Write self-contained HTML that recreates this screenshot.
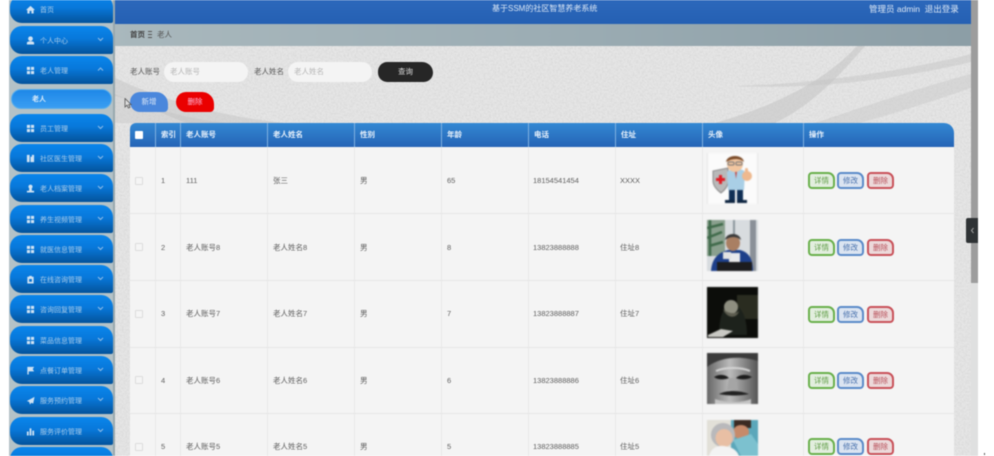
<!DOCTYPE html>
<html lang="zh"><head><meta charset="utf-8"><title>基于SSM的社区智慧养老系统</title>
<style>
*{box-sizing:border-box}
html,body{margin:0;padding:0;width:994px;height:456px;overflow:hidden;background:#fff}
body{font-family:"Liberation Sans","Noto Sans CJK SC",sans-serif;font-size:7.5px;color:#555;position:relative}
.a{position:absolute}
#wrap{position:absolute;left:0;top:0;width:994px;height:456px;overflow:hidden;filter:blur(.45px)}
.m{position:absolute;left:10px;width:103px;height:28px;border-radius:12px 12px 2px 12px;background:linear-gradient(180deg,#0a86ec 0%,#0878da 45%,#04539b 100%);color:#a9cbe8;line-height:31px;font-size:7px}
.m span{position:absolute;left:30px;white-space:nowrap}
.m svg.i{position:absolute;left:16px;top:10px;width:9px;height:9px}
.m svg.c{position:absolute;left:87px;top:10px;width:7px;height:6px}
.th{position:absolute;top:123px;height:24px;line-height:24px;color:#e8f1fb;font-weight:bold;padding-left:5px;border-right:1px solid #7fb0e0}
.v{position:absolute;width:1px;top:147px;height:309px;background:#e8e8e8}
.h{position:absolute;left:130px;width:824px;height:1px;background:#e6e6e6}
.t{position:absolute;white-space:nowrap;height:12px;line-height:12px;color:#5e5e5e}
.cb{position:absolute;left:135px;width:8px;height:8px;border:1px solid #dcdcdc;background:#f5f5f5;border-radius:1px}
.b{position:absolute;width:27px;height:17px;border:2px solid;border-radius:4px 7px 4px 4px;text-align:center;line-height:13px;font-size:7.5px}
.g{left:808px;border-color:#6ab04c;background:#e2eede;color:#5f9d45}
.u{left:837px;border-color:#5b8bc9;background:#dbe4f1;color:#4a72ad}
.r{left:867px;border-color:#c9525a;background:#ecd9da;color:#b8505a}
.pic{position:absolute;left:707px;width:51px;height:51px;overflow:hidden;filter:blur(.5px)}
</style></head><body><div id="wrap">

<!-- sidebar bg -->
<div class="a" style="left:9px;top:0;width:106px;height:456px;background:#b4c2c7"></div>
<div class="a" style="left:113px;top:0;width:2px;height:456px;background:#98a8ae"></div>

<!-- main bg -->
<div class="a" style="left:115px;top:46px;width:856px;height:410px;background:#e6e6e6"></div>
<svg class="a" style="left:115px;top:46px" width="856" height="410" viewBox="0 0 856 410">
<defs><filter id="n" x="0" y="0" width="100%" height="100%"><feTurbulence type="fractalNoise" baseFrequency=".55" numOctaves="2" seed="3"/><feColorMatrix values="0 0 0 0 .55 0 0 0 0 .55 0 0 0 0 .55 0 0 0 .8 -.28"/></filter></defs>
<path d="M0 32C50 55 110 72 180 78L80 80C50 70 25 55 0 50Z" fill="#c6c6c6" opacity=".55"/>
<path d="M0 48C40 65 90 78 150 80L110 77H0Z" fill="#bdbdbd" opacity=".35"/>
<path d="M600 77C660 60 710 35 742 0L750 0C720 35 695 60 660 77Z" fill="#c2c2c2" opacity=".55"/>
<path d="M620 40C700 38 790 25 856 8V16C790 32 700 44 620 40Z" fill="#c6c6c6" opacity=".5"/>
<path d="M700 77C750 60 810 40 856 28V42C810 58 770 70 745 77Z" fill="#c8c8c8" opacity=".45"/>
<rect width="856" height="410" filter="url(#n)"/>
</svg>

<!-- top bar -->
<div class="a" style="left:115px;top:0;width:856px;height:24px;background:linear-gradient(180deg,#2c68bb,#2560b3)"></div>
<div class="a" style="left:492px;top:3px;color:#dbe7f5;font-size:8px;line-height:12px;white-space:nowrap">基于SSM的社区智慧养老系统</div>
<div class="a" style="left:869px;top:3px;color:#dbe7f5;font-size:8.5px;line-height:12px;white-space:nowrap">管理员 admin&nbsp;&nbsp;退出登录</div>

<!-- breadcrumb -->
<div class="a" style="left:115px;top:24px;width:856px;height:22px;background:linear-gradient(90deg,#a9b8bd,#9cadb4 50%,#8c9ea6)"></div>
<div class="a" style="left:130px;top:29px;line-height:12px;font-weight:bold;color:#444">首页</div>
<div class="a" style="left:148px;top:31px;width:4px;height:7px;border-top:1px solid #555;border-bottom:1px solid #555"><div style="margin-top:2px;height:1px;background:#555"></div></div>
<div class="a" style="left:157px;top:29px;line-height:12px;color:#555">老人</div>

<!-- search -->
<div class="a" style="left:130px;top:66px;line-height:12px;color:#555">老人账号</div>
<div class="a" style="left:164px;top:62px;width:84px;height:20px;border-radius:10px;background:#f4f4f4;line-height:20px;padding-left:6px;color:#b5b5b5">老人账号</div>
<div class="a" style="left:254px;top:66px;line-height:12px;color:#555">老人姓名</div>
<div class="a" style="left:288px;top:62px;width:84px;height:20px;border-radius:10px;background:#f4f4f4;line-height:20px;padding-left:6px;color:#b5b5b5">老人姓名</div>
<div class="a" style="left:378px;top:62px;width:55px;height:20px;border-radius:12px 14px 12px 12px;background:#262626;color:#ddd;text-align:center;line-height:20px">查询</div>
<div class="a" style="left:130px;top:92px;width:38px;height:20px;border-radius:10px 12px 4px 10px;background:#4a87dc;color:#dbe7f7;text-align:center;line-height:20px">新增</div>
<div class="a" style="left:176px;top:92px;width:38px;height:20px;border-radius:10px 12px 4px 10px;background:#ea0000;color:#fbd;text-align:center;line-height:20px">删除</div>
<svg class="a" style="left:124px;top:98px" width="8" height="11" viewBox="0 0 8 11"><path d="M1 .5V9L3 7.200 4.400 10 6 9.300 4.700 6.600H7.200Z" fill="#ddd" stroke="#555" stroke-width=".8"/></svg>

<!-- table -->
<div class="a" style="left:130px;top:147px;width:824px;height:309px;background:#f4f4f4"></div>
<div class="a" style="left:130px;top:123px;width:824px;height:24px;border-radius:6px 10px 0 0;background:linear-gradient(180deg,#3388d3,#2564b6)"></div>
<div class="a" style="left:135px;top:131px;width:8px;height:8px;background:#fff;border-radius:1px"></div>
<div class="th" style="left:130px;width:26px;padding:0"></div>
<div class="th" style="left:156px;width:25px">索引</div>
<div class="th" style="left:181px;width:87px">老人账号</div>
<div class="th" style="left:268px;width:87px">老人姓名</div>
<div class="th" style="left:355px;width:87px">性别</div>
<div class="th" style="left:442px;width:87px">年龄</div>
<div class="th" style="left:529px;width:87px">电话</div>
<div class="th" style="left:616px;width:87px">住址</div>
<div class="th" style="left:703px;width:101px">头像</div>
<div class="th" style="left:804px;width:140px;border:0">操作</div>

<div class="v" style="left:155px"></div><div class="v" style="left:180px"></div><div class="v" style="left:267px"></div><div class="v" style="left:354px"></div><div class="v" style="left:441px"></div><div class="v" style="left:528px"></div><div class="v" style="left:615px"></div><div class="v" style="left:702px"></div><div class="v" style="left:803px"></div>
<div class="h" style="top:213px"></div><div class="h" style="top:280px"></div><div class="h" style="top:347px"></div><div class="h" style="top:413px"></div>

<!-- row 1 -->
<div class="cb" style="top:177px"></div><div class="t" style="left:161px;top:175px">1</div><div class="t" style="left:186px;top:175px">111</div><div class="t" style="left:273px;top:175px">张三</div><div class="t" style="left:360px;top:175px">男</div><div class="t" style="left:447px;top:175px">65</div><div class="t" style="left:533px;top:175px">18154541454</div><div class="t" style="left:620px;top:175px">XXXX</div>
<div class="b g" style="top:172px">详情</div><div class="b u" style="top:172px">修改</div><div class="b r" style="top:172px">删除</div>
<!-- row 2 -->
<div class="cb" style="top:243px"></div><div class="t" style="left:161px;top:242px">2</div><div class="t" style="left:186px;top:242px">老人账号8</div><div class="t" style="left:273px;top:242px">老人姓名8</div><div class="t" style="left:360px;top:242px">男</div><div class="t" style="left:447px;top:242px">8</div><div class="t" style="left:533px;top:242px">13823888888</div><div class="t" style="left:620px;top:242px">住址8</div>
<div class="b g" style="top:239px">详情</div><div class="b u" style="top:239px">修改</div><div class="b r" style="top:239px">删除</div>
<!-- row 3 -->
<div class="cb" style="top:310px"></div><div class="t" style="left:161px;top:308px">3</div><div class="t" style="left:186px;top:308px">老人账号7</div><div class="t" style="left:273px;top:308px">老人姓名7</div><div class="t" style="left:360px;top:308px">男</div><div class="t" style="left:447px;top:308px">7</div><div class="t" style="left:533px;top:308px">13823888887</div><div class="t" style="left:620px;top:308px">住址7</div>
<div class="b g" style="top:306px">详情</div><div class="b u" style="top:306px">修改</div><div class="b r" style="top:306px">删除</div>
<!-- row 4 -->
<div class="cb" style="top:376px"></div><div class="t" style="left:161px;top:375px">4</div><div class="t" style="left:186px;top:375px">老人账号6</div><div class="t" style="left:273px;top:375px">老人姓名6</div><div class="t" style="left:360px;top:375px">男</div><div class="t" style="left:447px;top:375px">6</div><div class="t" style="left:533px;top:375px">13823888886</div><div class="t" style="left:620px;top:375px">住址6</div>
<div class="b g" style="top:372px">详情</div><div class="b u" style="top:372px">修改</div><div class="b r" style="top:372px">删除</div>
<!-- row 5 -->
<div class="cb" style="top:443px"></div><div class="t" style="left:161px;top:441px">5</div><div class="t" style="left:186px;top:441px">老人账号5</div><div class="t" style="left:273px;top:441px">老人姓名5</div><div class="t" style="left:360px;top:441px">男</div><div class="t" style="left:447px;top:441px">5</div><div class="t" style="left:533px;top:441px">13823888885</div><div class="t" style="left:620px;top:441px">住址5</div>
<div class="b g" style="top:438px">详情</div><div class="b u" style="top:438px">修改</div><div class="b r" style="top:438px">删除</div>

<!-- avatars -->
<div class="pic" style="top:153px;background:#fbfbfb;border:1px solid #e8e8e8;border-top:0;border-bottom:0">
<svg width="49" height="51" viewBox="0 0 49 51">
<path d="M5 18L20 15 20 30C19 36 14 39 13 40 9 37 5 33 5 28Z" fill="#b9b9b9" stroke="#777" stroke-width=".8"/>
<path d="M8 25h3v-3h3v3h3v3h-3v3h-3v-3H8z" fill="#e01b24"/>
<path d="M19 19C22 15 35 15 37 19L36 37H20Z" fill="#a9cfe6"/>
<path d="M27 18l2 0-1 8z" fill="#c8332c"/>
<ellipse cx="27" cy="11" rx="8" ry="8" fill="#f2c6a0"/>
<path d="M18 9C19 1 35 1 36 9 32 5 24 5 18 9Z" fill="#7a4a28"/>
<rect x="20" y="9" width="6" height="3" rx="1" fill="none" stroke="#456" stroke-width=".7"/><rect x="28" y="9" width="6" height="3" rx="1" fill="none" stroke="#456" stroke-width=".7"/>
<circle cx="39" cy="23" r="5" fill="#eeb98f"/><rect x="37" y="15" width="3" height="6" rx="1.500" fill="#eeb98f"/>
<path d="M21 37h6v10h-6zM29 37h6v10h-6z" fill="#0f2f55"/>
<path d="M17 47h10v3H17zM29 47h10v3H29z" fill="#0d2440"/>
</svg></div>

<div class="pic" style="top:220px;background:#cfd4d8">
<svg width="51" height="51" viewBox="0 0 51 51"><rect width="51" height="51" fill="#d8dcdf"/><rect x="0" y="0" width="18" height="36" fill="#8aa08e"/><path d="M3 0V36M0 8L16 4M0 18L15 12M2 26L16 22" stroke="#3f6a4a" stroke-width="2.500" fill="none"/><rect x="26" y="0" width="2" height="30" fill="#8c969c"/><rect x="43" y="0" width="6" height="51" fill="#8a9098"/>
<path d="M4 51C5 36 14 32 21 30H33C41 32 46 38 46 51Z" fill="#1d3f8a"/><ellipse cx="26" cy="23" rx="7" ry="8" fill="#a97f63"/><path d="M18 20C19 12 33 12 34 20 30 16 23 16 18 20Z" fill="#3a3a3a"/><path d="M22 33H33V44H22Z" fill="#e9e9ec"/><rect x="16" y="32" width="8" height="7" fill="#e2e2e2"/><rect x="10" y="42" width="35" height="9" fill="#1c1c1e"/></svg></div>

<div class="pic" style="top:287px;background:#0c0d0a">
<svg width="51" height="51" viewBox="0 0 51 51"><rect width="51" height="51" fill="#0c0d0a"/><rect x="30" y="8" width="21" height="24" fill="#2a2c20"/><path d="M12 48C12 30 16 20 24 16 32 18 40 26 40 48Z" fill="#1d221c"/><ellipse cx="24" cy="20" rx="7" ry="7" fill="#8e8e80"/><path d="M16 22C20 26 28 28 32 24 30 32 20 32 16 22Z" fill="#5d5d50"/><path d="M1 48L14 42 26 44 16 50H1Z" fill="#c9c9c4"/></svg></div>

<div class="pic" style="top:353px;background:#777">
<svg width="51" height="51" viewBox="0 0 51 51"><defs><linearGradient id="fg" x1="0" x2="1"><stop offset="0" stop-color="#666"/><stop offset=".45" stop-color="#bbb"/><stop offset="1" stop-color="#555"/></linearGradient></defs><rect width="51" height="51" fill="url(#fg)"/><path d="M0 0H51V8C35 3 15 3 0 14Z" fill="#3b3b3b"/><path d="M9 18C18 14 34 14 43 18" stroke="#d5d5d5" stroke-width="2" fill="none"/><path d="M7 24C12 21 18 21 22 25 17 27 11 27 7 24ZM29 25C33 21 40 21 45 24 40 27 33 27 29 25Z" fill="#1c1c1c"/><path d="M22 25L20 37H31L29 25Z" fill="#a5a5a5"/><path d="M12 41C20 37 32 37 42 41 34 43 20 43 12 41Z" fill="#222"/><path d="M8 46C20 50 34 50 44 46V51H8Z" fill="#c4c4c4"/></svg></div>

<div class="pic" style="top:420px;background:#dbe3e6;height:36px">
<svg width="51" height="36" viewBox="0 0 51 36"><rect width="51" height="36" fill="#e2e0d8"/><rect x="24" y="0" width="27" height="36" fill="#5ba7ba"/><rect x="27" y="0" width="17" height="8" fill="#3a2a22"/><ellipse cx="34" cy="12" rx="8" ry="7" fill="#c68a6a"/><path d="M26 20L44 14 51 24V36H34Z" fill="#7cc1cf"/><ellipse cx="16" cy="15" rx="12" ry="12" fill="#b9b9bb"/><ellipse cx="17" cy="18" rx="8.500" ry="9" fill="#e8bfa4"/><path d="M2 36C4 28 10 25 17 26 25 27 30 30 32 36Z" fill="#f3f3f3"/></svg></div>

<!-- sidebar items -->
<div class="m" style="top:-5px"><svg class="i" viewBox="0 0 10 10"><path d="M5 1L0 5.500H1.500V9.500H4V6.500H6V9.500H8.500V5.500H10Z" fill="#cfe2f3"/></svg><span>首页</span></div>
<div class="m" style="top:26px"><svg class="i" viewBox="0 0 10 10"><circle cx="5" cy="3" r="2.600" fill="#cfe2f3"/><path d="M1 9.500V7.500C1 6.300 3 5.800 5 5.800S9 6.300 9 7.500V9.500Z" fill="#cfe2f3"/></svg><span>个人中心</span><svg class="c" viewBox="0 0 7 6"><path d="M1 2L3.500 4.500 6 2" fill="none" stroke="#8fbce6"/></svg></div>
<div class="m" style="top:56px"><svg class="i" viewBox="0 0 10 10"><path d="M1 1h3.500v3.500H1zM5.500 1H9v3.500H5.500zM1 5.500h3.500V9H1zM5.500 5.500H9V9H5.500z" fill="#cfe2f3"/></svg><span>老人管理</span><svg class="c" viewBox="0 0 7 6"><path d="M1 4.500L3.500 2 6 4.500" fill="none" stroke="#8fbce6"/></svg></div>
<div class="a" style="left:11px;top:89px;width:101px;height:20px;border-radius:10px;background:linear-gradient(180deg,#1e88e8,#3a9ef2);border:1px solid #5aaeea;color:#dcecfa;line-height:20px;padding-left:20px;font-weight:bold;font-size:7px">老人</div>
<div class="m" style="top:114px"><svg class="i" viewBox="0 0 10 10"><path d="M1 1h3.500v3.500H1zM5.500 1H9v3.500H5.500zM1 5.500h3.500V9H1zM5.500 5.500H9V9H5.500z" fill="#cfe2f3"/></svg><span>员工管理</span><svg class="c" viewBox="0 0 7 6"><path d="M1 2L3.500 4.500 6 2" fill="none" stroke="#8fbce6"/></svg></div>
<div class="m" style="top:144px"><svg class="i" viewBox="0 0 10 10"><path d="M1 1h3v8H1zM5 3h1.500v-2h2.500v8H5z" fill="#cfe2f3"/></svg><span>社区医生管理</span><svg class="c" viewBox="0 0 7 6"><path d="M1 2L3.500 4.500 6 2" fill="none" stroke="#8fbce6"/></svg></div>
<div class="m" style="top:174px"><svg class="i" viewBox="0 0 10 10"><circle cx="5" cy="3" r="2.300" fill="#cfe2f3"/><path d="M3.500 5h3v2.500H9v2H1v-2h2.500z" fill="#cfe2f3"/></svg><span>老人档案管理</span><svg class="c" viewBox="0 0 7 6"><path d="M1 2L3.500 4.500 6 2" fill="none" stroke="#8fbce6"/></svg></div>
<div class="m" style="top:205px"><svg class="i" viewBox="0 0 10 10"><path d="M1 1h3.500v3.500H1zM5.500 1H9v3.500H5.500zM1 5.500h3.500V9H1zM5.500 5.500H9V9H5.500z" fill="#cfe2f3"/></svg><span>养生视频管理</span><svg class="c" viewBox="0 0 7 6"><path d="M1 2L3.500 4.500 6 2" fill="none" stroke="#8fbce6"/></svg></div>
<div class="m" style="top:235px"><svg class="i" viewBox="0 0 10 10"><path d="M1 1h3.500v3.500H1zM5.500 1H9v3.500H5.500zM1 5.500h3.500V9H1zM5.500 5.500H9V9H5.500z" fill="#cfe2f3"/></svg><span>就医信息管理</span><svg class="c" viewBox="0 0 7 6"><path d="M1 2L3.500 4.500 6 2" fill="none" stroke="#8fbce6"/></svg></div>
<div class="m" style="top:265px"><svg class="i" viewBox="0 0 10 10"><path fill-rule="evenodd" d="M1.500 2H3.500V1H6.500V2H8.500V9.500H1.500ZM3.500 4.500V7.500H6.500V4.500Z" fill="#cfe2f3"/></svg><span>在线咨询管理</span><svg class="c" viewBox="0 0 7 6"><path d="M1 2L3.500 4.500 6 2" fill="none" stroke="#8fbce6"/></svg></div>
<div class="m" style="top:295px"><svg class="i" viewBox="0 0 10 10"><path d="M1 1h3.500v3.500H1zM5.500 1H9v3.500H5.500zM1 5.500h3.500V9H1zM5.500 5.500H9V9H5.500z" fill="#cfe2f3"/></svg><span>咨询回复管理</span><svg class="c" viewBox="0 0 7 6"><path d="M1 2L3.500 4.500 6 2" fill="none" stroke="#8fbce6"/></svg></div>
<div class="m" style="top:326px"><svg class="i" viewBox="0 0 10 10"><path d="M1 1h3.500v3.500H1zM5.500 1H9v3.500H5.500zM1 5.500h3.500V9H1zM5.500 5.500H9V9H5.500z" fill="#cfe2f3"/></svg><span>菜品信息管理</span><svg class="c" viewBox="0 0 7 6"><path d="M1 2L3.500 4.500 6 2" fill="none" stroke="#8fbce6"/></svg></div>
<div class="m" style="top:356px"><svg class="i" viewBox="0 0 10 10"><path d="M1.500 1H9L7.500 3.500 9 6H3V9.500H1.500Z" fill="#cfe2f3"/></svg><span>点餐订单管理</span><svg class="c" viewBox="0 0 7 6"><path d="M1 2L3.500 4.500 6 2" fill="none" stroke="#8fbce6"/></svg></div>
<div class="m" style="top:386px"><svg class="i" viewBox="0 0 10 10"><path d="M9.500 1L1 5.500 3.500 6.500 4.500 9.500 6 7.500 8 8.500Z" fill="#cfe2f3"/></svg><span>服务预约管理</span><svg class="c" viewBox="0 0 7 6"><path d="M1 2L3.500 4.500 6 2" fill="none" stroke="#8fbce6"/></svg></div>
<div class="m" style="top:417px"><svg class="i" viewBox="0 0 10 10"><path d="M1 5h2v4.500H1zM4 1.500h2v8H4zM7 4h2v5.500H7z" fill="#cfe2f3"/></svg><span>服务评价管理</span><svg class="c" viewBox="0 0 7 6"><path d="M1 2L3.500 4.500 6 2" fill="none" stroke="#8fbce6"/></svg></div>
<div class="m" style="top:447px"></div>

<!-- scrollbar -->
<div class="a" style="left:971px;top:0;width:7px;height:456px;background:#dfe0e0"></div>
<div class="a" style="left:971px;top:0;width:7px;height:283px;background:#9d9d9d"></div>
<!-- side tab -->
<div class="a" style="left:966px;top:218px;width:12px;height:25px;background:#2f3335;border-radius:2px 0 0 2px"></div>
<svg class="a" style="left:970px;top:227px" width="5" height="7" viewBox="0 0 5 7"><path d="M3.500 1L1.500 3.500 3.500 6" fill="none" stroke="#aaa"/></svg>
<div class="a" style="left:984px;top:453px;width:1px;height:2px;background:#555"></div>
</div></body></html>
